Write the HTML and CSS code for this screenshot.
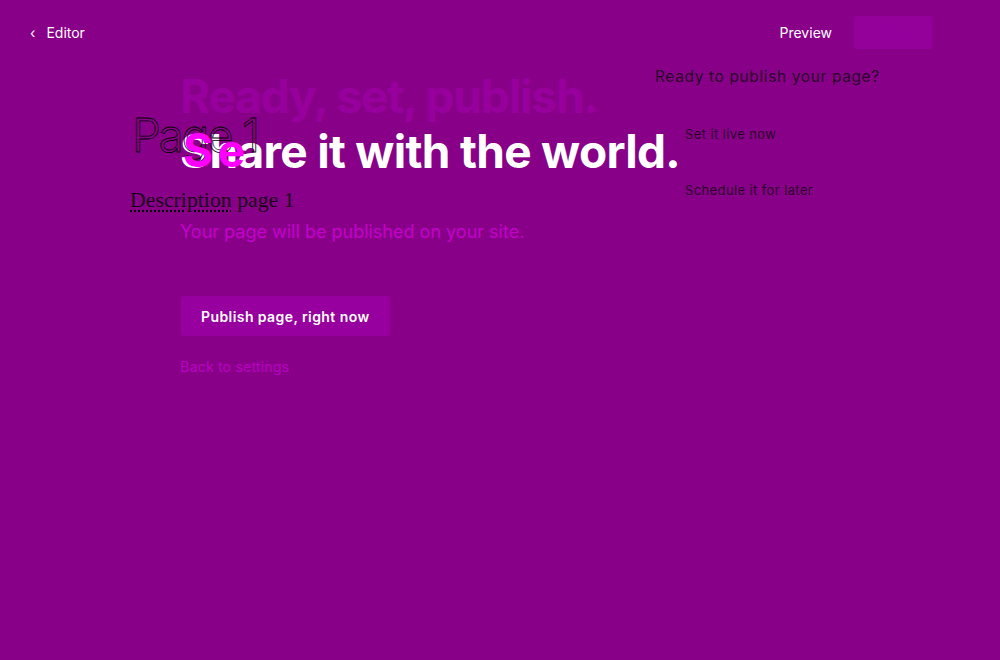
FILE: index.html
```html
<!DOCTYPE html>
<html>
<head>
<meta charset="utf-8">
<link rel="stylesheet" href="styles.css">
</head>
<body>
<header class="topbar">
  <a class="back"><span class="chev">‹</span>Editor</a>
  <div class="actions">
    <a class="preview">Preview</a>
    <button class="publish-top">Publish</button>
  </div>
</header>
<main class="main">
  <section class="left">
    <h1 class="title">
      <span class="muted">Ready, set, publish.</span>
      <span class="white"><span class="ghost">Se</span>Share it with the world.</span>
    </h1>
    <p class="lead">Your page will be published on your site.</p>
    <button class="cta">Publish page, right now</button>
    <a class="back-settings">Back to settings</a>
    <div class="page-name">Page 1</div>
    <div class="page-desc"><span class="spell">Description</span> page 1</div>
  </section>
  <aside class="right">
    <p class="q">Ready to publish your page?</p>
    <p class="opt">Set it live now</p>
    <p class="opt">Schedule it for later</p>
  </aside>
</main>
</body>
</html>
```
FILE: styles.css
```css
html, body { margin: 0; padding: 0; }
body {
  background: #880088;
  width: 1000px;
  height: 660px;
  overflow: hidden;
  font-family: Inter, "Liberation Sans", sans-serif;
  color: #fff;
}
.topbar {
  display: flex;
  justify-content: space-between;
  align-items: center;
  height: 64px;
  padding: 0 68px 0 30px;
}
.back { font-size: 14px; color: #fff; display: flex; align-items: center; }
.chev { font-size: 14px; margin-right: 11px; }
.actions { display: flex; align-items: center; gap: 22px; }
.preview { font-size: 14px; color: #fff; }
.publish-top {
  width: 78px; height: 33px;
  background: #93009a;
  border: none; border-radius: 3px;
  color: #95009b;
  font-family: Inter, sans-serif; font-size: 14px; font-weight: 600;
}
.main {
  display: grid;
  grid-template-columns: 475px 1fr;
  padding-left: 180px;
}
.left { position: relative; }
.title {
  margin: 5px 0 0;
  font-size: 46px;
  line-height: 55px;
  font-weight: 700;
  letter-spacing: -0.015em;
  white-space: nowrap;
}
.title > span { display: block; position: relative; }
.muted { color: #97009d; letter-spacing: -0.025em; }
.white { color: #fff; }
.ghost {
  position: absolute;
  left: 3px; top: -1px;
  color: #ff00ff;
  letter-spacing: 0.1em;
  z-index: 1;
}
.lead {
  margin: 42px 0 0;
  font-size: 18px;
  color: #c400cc;
}
.cta {
  display: block;
  margin-top: 54px;
  margin-left: 1px;
  height: 40px;
  padding: 0 20px;
  background: #97009e;
  border: none; border-radius: 3px;
  color: #fff;
  font-family: Inter, sans-serif; font-size: 14px; font-weight: 600;
  letter-spacing: 0.03em;
}
.back-settings {
  display: block;
  margin-top: 22px;
  font-size: 14.5px;
  color: #b800c2;
}
.page-name {
  position: absolute;
  left: -48px; top: 43px;
  font-family: Inter, sans-serif;
  font-weight: 300;
  font-size: 46px;
  letter-spacing: -0.05em;
  color: transparent;
  -webkit-text-stroke: 0.8px #000;
}
.page-desc {
  position: absolute;
  left: -50px; top: 124px;
  font-family: "Liberation Serif", serif;
  font-size: 21.8px;
  color: #1a001a;
}
.spell { text-decoration: underline dotted #000; text-underline-offset: 3px; }
.right { color: #000; font-size: 13px; }
.right p { margin: 0; }
.q { margin-top: 3px !important; font-size: 15.5px; opacity: 0.7; letter-spacing: 0.04em; }
.opt { margin-top: 40px !important; padding-left: 30px; opacity: 0.7; letter-spacing: 0.03em; }
```
